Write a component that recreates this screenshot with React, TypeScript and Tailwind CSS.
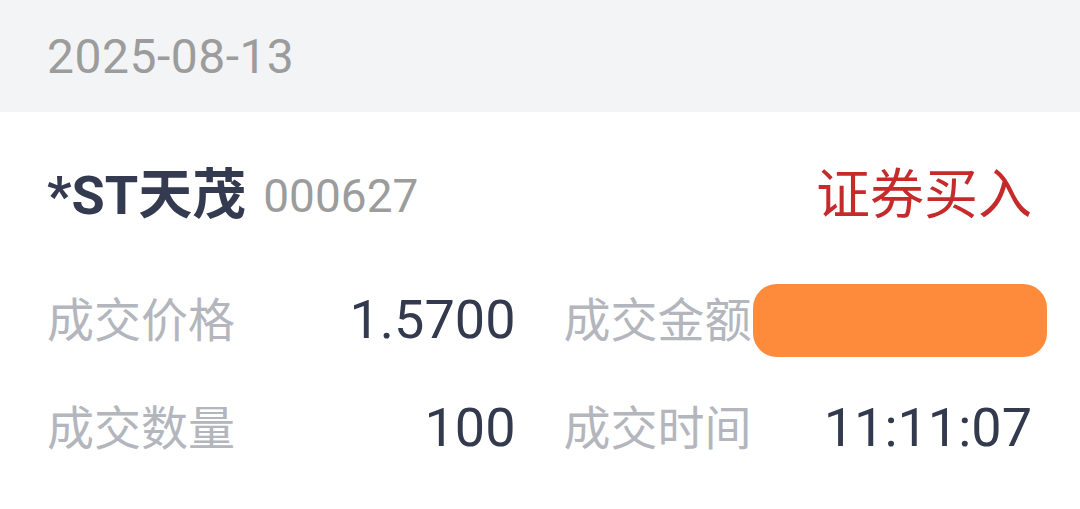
const font = { fontFamily: '"Roboto", "Noto Sans CJK SC", sans-serif' };

function Field({ label, value, masked }: { label: string; value: string; masked?: boolean }) {
  return (
    <div className="relative flex h-[108px] items-center justify-between">
      <span className="text-[47px] leading-none text-[#b4b6bd]">{label}</span>
      <span className="text-[54px] leading-none text-[#343a4e]">{value}</span>
      {masked && (
        <div className="absolute right-[-15px] top-[18px] h-[73px] w-[294px] rounded-[24px] bg-[#fd8b3b]" />
      )}
    </div>
  );
}

export default function App() {
  return (
    <div className="h-[509px] w-[1080px] overflow-hidden bg-white" style={font}>
      <div className="flex h-[112px] items-center bg-[#f3f4f6] px-[47px] pt-[2px]">
        <span className="text-[48px] leading-none tracking-[0.5px] text-[#9c9c9c]">2025-08-13</span>
      </div>

      <div className="px-[47px] pr-[48px]">
        <div className="mt-[56px] flex h-[56px] items-center justify-between">
          <div className="flex items-center gap-[17px]">
            <span className="text-[54px] font-bold leading-none text-[#343a50]">*ST天茂</span>
            <span className="text-[46px] leading-none text-[#9c9c9c]">000627</span>
          </div>
          <span className="text-[54px] leading-none text-[#c62b2b]">证券买入</span>
        </div>

        <div className="mt-[42px] grid grid-cols-2 gap-x-[48px]">
          <Field label="成交价格" value="1.5700" />
          <Field label="成交金额" value="157.00" masked />
          <Field label="成交数量" value="100" />
          <Field label="成交时间" value="11:11:07" />
        </div>
      </div>
    </div>
  );
}
